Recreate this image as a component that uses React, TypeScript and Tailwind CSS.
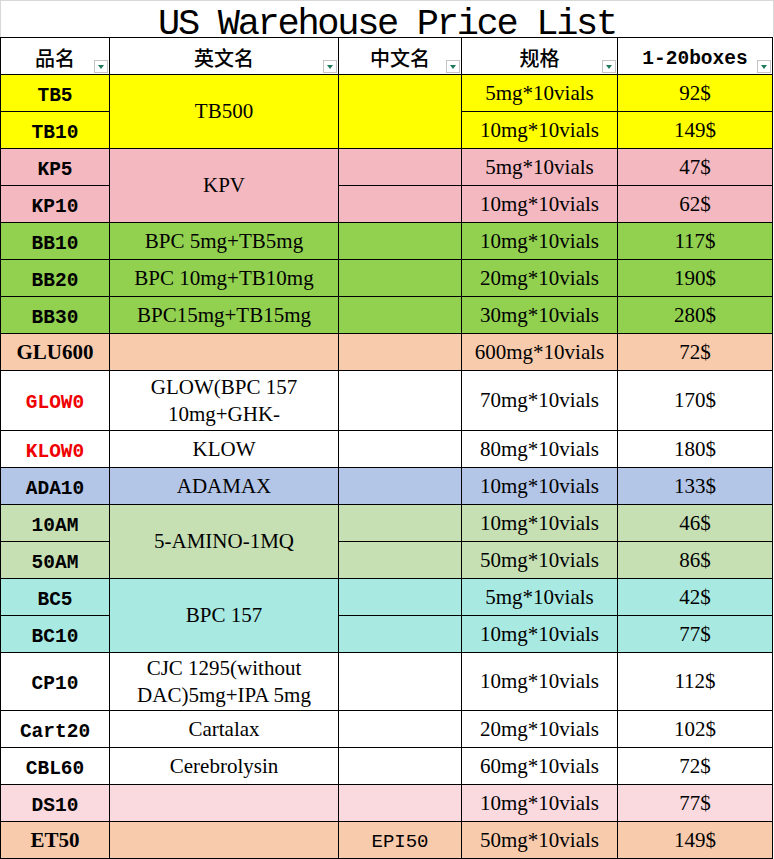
import React from "react";

const SKIP = "__skip__";

type Row = {
  code: string;
  codeStyle?: "red" | "serif";
  bg: string;
  en: string | string[] | null;
  enSpan?: boolean;
  zh: string | null;
  zhSpan?: boolean;
  spec: string;
  price: string;
};

const CELL =
  "flex items-center justify-center text-center border-r border-b border-black text-black overflow-hidden";
const SER = "font-['Liberation_Serif',serif] text-[21px] leading-[27px]";
const MONO = "font-['Liberation_Mono',monospace] text-[19.5px] leading-[24px] font-bold pt-[5px]";
const MONO_REG = "font-['Liberation_Mono',monospace] text-[19px] leading-[24px] pt-[4px]";
const CJK = "font-['Noto_Sans_CJK_SC',sans-serif] text-[20px] leading-[22px] font-medium pt-[3px]";

const rows: Row[] = [
  { code: "TB5", bg: "bg-[#ffff00]", en: "TB500", enSpan: true, zh: "", zhSpan: true, spec: "5mg*10vials", price: "92$" },
  { code: "TB10", bg: "bg-[#ffff00]", en: SKIP, zh: SKIP, spec: "10mg*10vials", price: "149$" },
  { code: "KP5", bg: "bg-[#f4b8c1]", en: "KPV", enSpan: true, zh: "", spec: "5mg*10vials", price: "47$" },
  { code: "KP10", bg: "bg-[#f4b8c1]", en: SKIP, zh: "", spec: "10mg*10vials", price: "62$" },
  { code: "BB10", bg: "bg-[#92d050]", en: "BPC 5mg+TB5mg", zh: "", spec: "10mg*10vials", price: "117$" },
  { code: "BB20", bg: "bg-[#92d050]", en: "BPC 10mg+TB10mg", zh: "", spec: "20mg*10vials", price: "190$" },
  { code: "BB30", bg: "bg-[#92d050]", en: "BPC15mg+TB15mg", zh: "", spec: "30mg*10vials", price: "280$" },
  { code: "GLU600", codeStyle: "serif", bg: "bg-[#f8cbad]", en: "", zh: "", spec: "600mg*10vials", price: "72$" },
  { code: "GLOW0", codeStyle: "red", bg: "bg-white", en: ["GLOW(BPC 157", "10mg+GHK-"], zh: "", spec: "70mg*10vials", price: "170$" },
  { code: "KLOW0", codeStyle: "red", bg: "bg-white", en: "KLOW", zh: "", spec: "80mg*10vials", price: "180$" },
  { code: "ADA10", bg: "bg-[#b4c6e7]", en: "ADAMAX", zh: "", spec: "10mg*10vials", price: "133$" },
  { code: "10AM", bg: "bg-[#c6e0b4]", en: "5-AMINO-1MQ", enSpan: true, zh: "", spec: "10mg*10vials", price: "46$" },
  { code: "50AM", bg: "bg-[#c6e0b4]", en: SKIP, zh: "", spec: "50mg*10vials", price: "86$" },
  { code: "BC5", bg: "bg-[#a8e9e2]", en: "BPC 157", enSpan: true, zh: "", spec: "5mg*10vials", price: "42$" },
  { code: "BC10", bg: "bg-[#a8e9e2]", en: SKIP, zh: "", spec: "10mg*10vials", price: "77$" },
  { code: "CP10", bg: "bg-white", en: ["CJC 1295(without", "DAC)5mg+IPA 5mg"], zh: "", spec: "10mg*10vials", price: "112$" },
  { code: "Cart20", bg: "bg-white", en: "Cartalax", zh: "", spec: "20mg*10vials", price: "102$" },
  { code: "CBL60", bg: "bg-white", en: "Cerebrolysin", zh: "", spec: "60mg*10vials", price: "72$" },
  { code: "DS10", bg: "bg-[#fad9df]", en: "", zh: "", spec: "10mg*10vials", price: "77$" },
  { code: "ET50", codeStyle: "serif", bg: "bg-[#f8cbad]", en: "", zh: "EPI50", spec: "50mg*10vials", price: "149$" },
];

function Filter() {
  return (
    <span className="absolute right-[1px] bottom-[1px] w-[14px] h-[13px] bg-white border border-[#c4c4c4] flex items-center justify-center">
      <span className="w-0 h-0 border-l-[3px] border-r-[3px] border-t-[4px] border-l-transparent border-r-transparent border-t-[#1f7a5c]" />
    </span>
  );
}

function Header({ children, mono }: { children: React.ReactNode; mono?: boolean }) {
  return (
    <div className={`${CELL} relative bg-white`}>
      <span className={mono ? MONO : CJK}>{children}</span>
      <Filter />
    </div>
  );
}

export default function App() {
  const cells: React.ReactNode[] = [];
  rows.forEach((r, i) => {
    const codeCls =
      r.codeStyle === "serif"
        ? "font-['Liberation_Serif',serif] text-[21px] leading-[27px] font-bold text-black"
        : r.codeStyle === "red"
        ? `${MONO} text-[#f00000]`
        : `${MONO} text-black`;
    cells.push(
      <div key={`c${i}`} className={`${CELL} ${r.bg}`}>
        <span className={codeCls}>{r.code}</span>
      </div>
    );
    if (r.en !== SKIP) {
      cells.push(
        <div key={`e${i}`} className={`${CELL} ${r.bg} ${r.enSpan ? "row-span-2" : ""}`}>
          <span className={SER}>
            {Array.isArray(r.en)
              ? r.en.map((l, k) => (
                  <span key={k} className="block">
                    {l}
                  </span>
                ))
              : r.en}
          </span>
        </div>
      );
    }
    if (r.zh !== SKIP) {
      cells.push(
        <div key={`z${i}`} className={`${CELL} ${r.bg} ${r.zhSpan ? "row-span-2" : ""}`}>
          <span className={MONO_REG}>{r.zh}</span>
        </div>
      );
    }
    cells.push(
      <div key={`s${i}`} className={`${CELL} ${r.bg}`}>
        <span className={SER}>{r.spec}</span>
      </div>
    );
    cells.push(
      <div key={`p${i}`} className={`${CELL} ${r.bg}`}>
        <span className={SER}>{r.price}</span>
      </div>
    );
  });

  return (
    <div className="w-[774px] h-[859px] bg-white overflow-hidden">
      <div className="h-[37px] w-[774px] border-t border-l border-r border-[#d8d8d8] text-center whitespace-nowrap font-['Liberation_Mono',monospace] text-[37px] leading-[24px] tracking-[-2.3px] pt-[11px] text-black">
        US Warehouse Price List
      </div>
      <div className="grid w-[773px] border-l border-t border-black grid-cols-[109px_229px_123px_156px_155px] grid-rows-[37px_37px_37px_37px_37px_37px_37px_37px_37px_60px_37px_37px_37px_37px_37px_37px_58px_37px_37px_37px_37px]">
        <Header>品名</Header>
        <Header>英文名</Header>
        <Header>中文名</Header>
        <Header>规格</Header>
        <Header mono>1-20boxes</Header>
        {cells}
      </div>
    </div>
  );
}
